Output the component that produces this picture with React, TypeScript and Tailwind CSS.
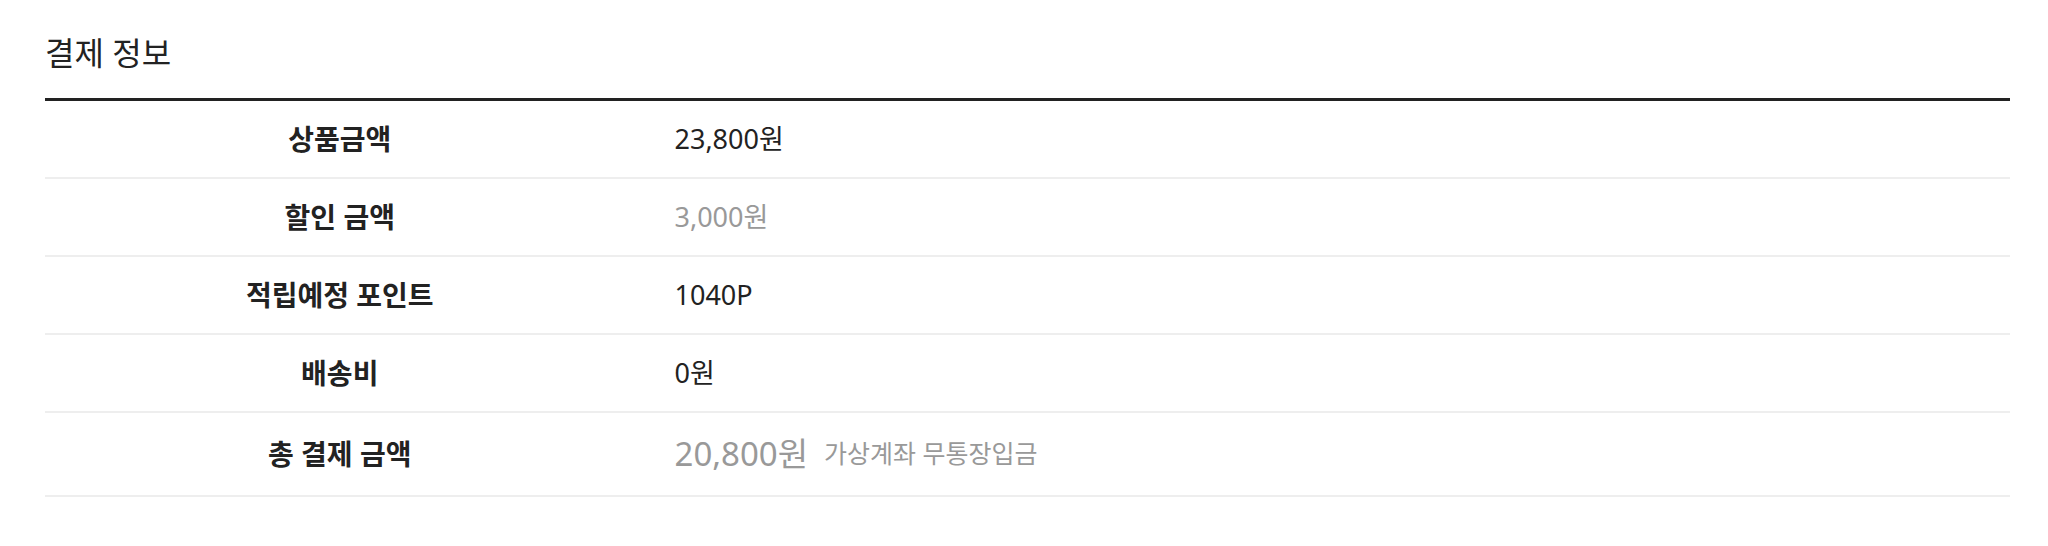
import React from 'react';

type Row = {
  label: string;
  value: React.ReactNode;
  tall?: boolean;
};

const rows: Row[] = [
  { label: '상품금액', value: <span className="text-[#222]">23,800원</span> },
  { label: '할인 금액', value: <span className="text-[#999]">3,000원</span> },
  { label: '적립예정 포인트', value: <span className="text-[#222]">1040P</span> },
  { label: '배송비', value: <span className="text-[#222]">0원</span> },
  {
    label: '총 결제 금액',
    tall: true,
    value: (
      <span className="flex items-center text-[#999]">
        <span className="text-[33px]">20,800원</span>
        <span className="ml-[16px] text-[25px]">가상계좌 무통장입금</span>
      </span>
    ),
  },
];

function App() {
  return (
    <div
      className="min-h-screen bg-white pl-[45px] pr-[38px] pt-[33px]"
      style={{ fontFamily: '"Noto Sans", "Noto Sans CJK KR", sans-serif' }}
    >
      {/* 제목 */}
      <h2 className="text-[32px] leading-[40px] text-[#222]">결제 정보</h2>

      {/* 결제 정보 테이블 */}
      <div className="mt-[25px] border-t-[3px] border-[#222]">
        {rows.map(row => (
          <div
            key={row.label}
            className={`flex items-center border-b-2 border-[#eeeeee] ${
              row.tall ? 'h-[84px]' : 'h-[78px]'
            }`}
          >
            <div className="w-[30%] text-center text-[28px] font-bold text-[#222]">
              {row.label}
            </div>
            <div className="flex-1 pl-[40px] text-[27px]">{row.value}</div>
          </div>
        ))}
      </div>
    </div>
  );
}

export default App;
